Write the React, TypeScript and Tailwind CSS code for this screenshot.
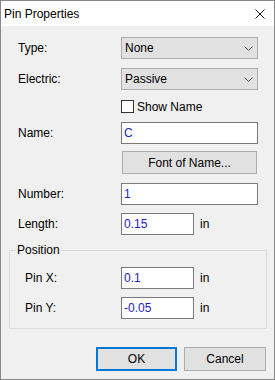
import React from 'react';

const font = { fontFamily: '"Liberation Sans", Arial, sans-serif' };

function Chevron() {
  return (
    <svg width="9" height="5" viewBox="0 0 9 5" className="ml-auto mr-[4px]">
      <polyline points="0.5,0.5 4.5,4.5 8.5,0.5" fill="none" stroke="#555" strokeWidth="1" />
    </svg>
  );
}

function Select({ value }: { value: string }) {
  return (
    <div className="flex items-center w-[137px] h-[22px] border border-[#adadad] bg-[#e1e1e1] pl-[3px] text-black">
      <span>{value}</span>
      <Chevron />
    </div>
  );
}

function Input({ value, w = 'w-[137px]' }: { value: string; w?: string }) {
  return (
    <div className={`flex items-center ${w} h-[22px] border border-[#7a7a7a] bg-white pl-[2px] text-[#2222cc]`}>
      {value}
    </div>
  );
}

function Row({ label, children, labelW = 'w-[103px]', className = '' }: { label: string; children: React.ReactNode; labelW?: string; className?: string }) {
  return (
    <div className={`flex items-center ${className}`}>
      <span className={`${labelW} shrink-0`}>{label}</span>
      {children}
    </div>
  );
}

export default function PinProperties() {
  return (
    <div className="w-[275px] h-[380px] border border-[#888] bg-[#f0f0f0] flex flex-col text-[12px] text-black" style={font}>
      <div className="h-[25px] bg-white flex items-center pl-[3px] pr-[9px]">
        <span>Pin Properties</span>
        <svg width="10" height="10" viewBox="0 0 10 10" className="ml-auto">
          <path d="M0.5 0.5 L9.5 9.5 M9.5 0.5 L0.5 9.5" stroke="#111" strokeWidth="1" />
        </svg>
      </div>

      <div className="flex flex-col pt-[11px] pl-[17px]">
        <Row label="Type:">
          <Select value="None" />
        </Row>
        <Row label="Electric:" className="mt-[9px]">
          <Select value="Passive" />
        </Row>
        <div className="flex items-center mt-[10px] h-[13px] pl-[103px]">
          <div className="w-[13px] h-[13px] border border-[#333] bg-white" />
          <span className="ml-[3px]">Show Name</span>
        </div>
        <Row label="Name:" className="mt-[9px]">
          <Input value="C" />
        </Row>
        <div className="mt-[7px] pl-[104px]">
          <div className="w-[135px] h-[23px] border border-[#adadad] bg-[#e1e1e1] flex items-center justify-center">
            Font of Name...
          </div>
        </div>
        <Row label="Number:" className="mt-[9px]">
          <Input value="1" />
        </Row>
        <Row label="Length:" className="mt-[8px]">
          <Input value="0.15" w="w-[73px]" />
          <span className="ml-[6px]">in</span>
        </Row>
      </div>

      <div className="relative mt-[15px] ml-[8px] w-[258px] border border-[#dcdcdc] pt-[16px] pb-[9px] pl-[15px]">
        <span className="absolute left-[6px] top-[-9px] px-[1px] bg-[#f0f0f0] leading-[16px]">Position</span>
        <Row label="Pin X:" labelW="w-[96px]">
          <Input value="0.1" w="w-[73px]" />
          <span className="ml-[6px]">in</span>
        </Row>
        <Row label="Pin Y:" labelW="w-[96px]" className="mt-[8px]">
          <Input value="-0.05" w="w-[73px]" />
          <span className="ml-[6px]">in</span>
        </Row>
      </div>

      <div className="flex mt-[18px] pl-[95px] gap-[7px]">
        <div className="w-[81px] h-[24px] border-2 border-[#0078d7] bg-[#e1e1e1] flex items-center justify-center">OK</div>
        <div className="w-[82px] h-[24px] border border-[#adadad] bg-[#e1e1e1] flex items-center justify-center">Cancel</div>
      </div>
    </div>
  );
}
